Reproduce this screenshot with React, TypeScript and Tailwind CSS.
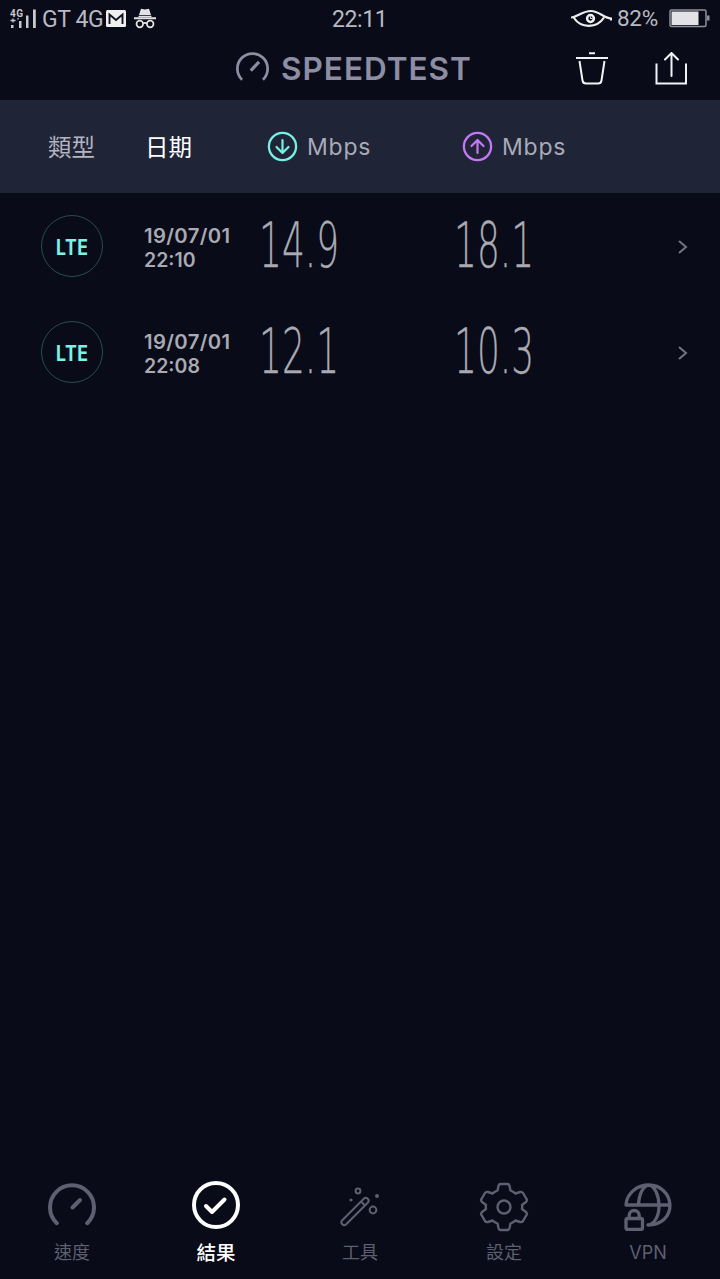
import React from 'react';

const cjk = "font-['Inter','Noto_Sans_CJK_TC',sans-serif]";

function Gauge({ className, thick, round }: { className: string; thick: number; round?: boolean }) {
  return (
    <svg className={className} viewBox="0 0 48 48" fill="none" stroke="currentColor" strokeWidth={thick} strokeLinecap={round ? 'round' : 'butt'}>
      <path d="M8.8 40.2A22 22 0 1 1 39.2 40.2" />
      <path d={round ? 'M24.5 24.5L32 17' : 'M21.5 27L33.5 14.5'} strokeWidth={round ? 4 : 4.6} />
    </svg>
  );
}

function StatusBar() {
  return (
    <div className="relative flex h-[37px] items-center font-['Roboto',sans-serif] text-[#b9b9c1]">
      <svg className="ml-[9px] h-[24px] w-[28px]" viewBox="0 0 28 24" fill="#c8c8ce">
        <text x="1" y="9.5" fontSize="10" fontWeight="700" fontFamily="Roboto" textLength="13">4G</text>
        <path d="M2 18h2.500v3H2zM10 14h2.500v7H10zM17 8.500h2.500v12.500H17zM24 2.500h2.800v18.500H24z" />
        <path d="M4 11.500v4M1.500 13.500h5M9 11v1.500" stroke="#c8c8ce" strokeWidth="1.300" fill="none" />
      </svg>
      <span className="ml-[5px] w-[61px] whitespace-nowrap pt-px text-[23px] leading-none tracking-[-0.4px]">GT 4G</span>
      <svg className="ml-[3px] h-[17px] w-[20px]" viewBox="0 0 20 17">
        <rect width="20" height="17" rx="1.500" fill="#f0f0f0" />
        <path d="M3.500 14V4.500L10 10l6.500-5.500V14" fill="none" stroke="#11131e" strokeWidth="1.900" />
      </svg>
      <svg className="ml-[8px] h-[21px] w-[22px]" viewBox="0 0 22 21" fill="#e3e3e6">
        <path d="M7 .7l4 .8 4-.8 2 6.300H5zM4.500 7.800h13v1.200h-13zM0 9.300h22V11.300H0z" />
        <g fill="none" stroke="#e3e3e6" strokeWidth="1.700"><circle cx="5.800" cy="16" r="3.300" /><circle cx="16.200" cy="16" r="3.300" /><path d="M9 15.500q2-1.300 4 0" /></g>
      </svg>
      <div className="absolute left-0 w-full pl-[332px] pt-[2px] text-[23px] leading-none tracking-[-0.4px]">22:11</div>
      <svg className="ml-auto h-[20px] w-[41px]" viewBox="0 0 41 20" fill="none" stroke="#eeeef0">
        <path d="M0 8.500C7 8 11 2 20 2c8 0 12 6.500 20 7.500v2M3 9C10 19.500 26 19.500 33 8.500" strokeWidth="2.200" />
        <circle cx="19.500" cy="9.500" r="3.400" strokeWidth="2.500" /><path d="M19.500 7.500v2h2" strokeWidth="1" />
      </svg>
      <span className="ml-[5px] w-[42px] whitespace-nowrap text-[22.500px] leading-none tracking-[-0.300px]">82%</span>
      <svg className="ml-[10px] mr-[10px] h-[19px] w-[41px]" viewBox="0 0 41 19">
        <rect x="1" y="1" width="36" height="16.500" rx="1.500" fill="none" stroke="#90919a" strokeWidth="1.500" />
        <path d="M2.500 2.500h27v13.500h-27z" fill="#e3e3e5" /><path d="M38 6.500h2.500v5H38z" fill="#90919a" />
      </svg>
    </div>
  );
}

function TitleBar() {
  return (
    <div className="flex h-[63px] items-center pl-[236px] text-[#8d8da3]">
      <Gauge className="-mt-[1px] h-[33px] w-[33px] shrink-0" thick={4} />
      <span className="ml-[12px] w-[190px] whitespace-nowrap font-['Inter',sans-serif] text-[31.500px] font-semibold leading-none tracking-[1px]">SPEEDTEST</span>
      <svg className="ml-[105px] h-[34px] w-[32px]" viewBox="0 0 32 34" fill="none" stroke="#f2f2f4" strokeWidth="2">
        <path d="M0 6H32M13 1.300H19" /><path d="M3.500 9L6.500 28.500Q7 31.500 10 31.500H22Q25 31.500 25.500 28.500L28.500 9" />
      </svg>
      <svg className="ml-[47px] h-[34px] w-[33px]" viewBox="0 0 33 34" fill="none" stroke="#f2f2f4" strokeWidth="2">
        <path d="M1.500 11.500V31.500H31V11.500" /><path d="M16.500 24V1.500M10 7.500L16.500 1L23 7.500" strokeLinecap="round" />
      </svg>
    </div>
  );
}

function Unit({ up }: { up?: boolean }) {
  return (
    <div className="flex items-center gap-[9px] pl-[7px]">
      <svg className="h-[31px] w-[31px]" viewBox="0 0 31 31" fill="none" stroke={up ? '#c478f6' : '#78efe3'} strokeWidth="2.200" strokeLinecap="round" strokeLinejoin="round">
        <circle cx="15.500" cy="15.500" r="13.600" strokeWidth="2.300" />
        <path d={up ? 'M15.500 22V9M9.500 15L15.500 9L21.500 15' : 'M15.500 9V22M9.500 16L15.500 22L21.500 16'} />
      </svg>
      <span className="pt-[2px] font-['Inter',sans-serif] text-[23px] leading-none tracking-[0.8px] text-[#a9abb7]">Mbps</span>
    </div>
  );
}

function Figure({ value }: { value: string }) {
  return (
    <div className="-ml-[1px] w-[80px]">
      <span className="inline-block origin-left scale-x-[0.58] whitespace-nowrap font-['DejaVu_Sans',sans-serif] text-[62px] font-extralight leading-[64px] text-[#aaaab2] [-webkit-text-stroke:0.3px_#aaaab2]">{value}</span>
    </div>
  );
}

function ResultRow({ time, down, up }: { time: string; down: string; up: string }) {
  return (
    <div className="grid h-[106px] grid-cols-[144px_116px_195px_1fr_42px] items-center">
      <div className="ml-[41px] flex h-[62px] w-[62px] items-center justify-center rounded-full border-[1.5px] border-[#244e53]">
        <span className="scale-x-[0.84] pt-[2px] font-['Inter',sans-serif] text-[21px] font-bold leading-none tracking-[0.6px] text-[#78f3e7]">LTE</span>
      </div>
      <div className="whitespace-nowrap pt-[3px] font-['Inter',sans-serif] text-[19.500px] font-semibold leading-[24px] text-[#aaaab2]">
        <div className="origin-left scale-x-[1.040] tracking-[0.35px]">19/07/01</div>
        <div>{time}</div>
      </div>
      <Figure value={down} />
      <Figure value={up} />
      <svg className="mt-px h-[14px] w-[10px]" viewBox="0 0 10 14" fill="none" stroke="#737582" strokeWidth="2"><path d="M1 1L8 7L1 13" /></svg>
    </div>
  );
}

function Tab({ label, active, children }: { label: string; active?: boolean; children: React.ReactNode }) {
  return (
    <div className={`flex flex-col items-center ${active ? 'text-white' : 'text-[#5e5f70]'}`}>
      <div className="flex h-[56px] items-center justify-center pt-px">{children}</div>
      <span className={`mt-[9px] leading-[20px] ${cjk} ${active ? 'text-[19.5px] font-medium' : 'text-[18px]'}`}>{label}</span>
    </div>
  );
}

export default function App() {
  return (
    <div className="flex h-[1279px] w-[720px] flex-col overflow-hidden bg-[#090b18]">
      <StatusBar />
      <TitleBar />
      <div className={`grid h-[93px] grid-cols-[145px_115px_195px_1fr] items-center bg-[#202437] text-[23.5px] leading-none ${cjk}`}>
        <div className="pl-[48px] pt-[2px] text-[#b2b4c0]">類型</div>
        <div className="pt-[2px] text-white">日期</div>
        <Unit />
        <Unit up />
      </div>
      <ResultRow time="22:10" down="14.9" up="18.1" />
      <ResultRow time="22:08" down="12.1" up="10.3" />
      <div className="mt-auto grid h-[101px] grid-cols-5">
        <Tab label="速度"><Gauge className="h-[48px] w-[48px]" thick={4} round /></Tab>
        <Tab label="結果" active>
          <svg className="-mt-[3px] h-[48px] w-[48px]" viewBox="0 0 48 48" fill="none" stroke="currentColor" strokeWidth="4" strokeLinecap="round" strokeLinejoin="round">
            <circle cx="24" cy="24" r="22" /><path d="M14 25L20 31L32.500 18.500" />
          </svg>
        </Tab>
        <Tab label="工具">
          <svg className="h-[48px] w-[48px]" viewBox="0 0 48 48" fill="none" stroke="currentColor" strokeWidth="2">
            <rect x="-18" y="-2.800" width="36" height="5.600" rx="2.800" transform="translate(19 28.500) rotate(-45)" />
            <path d="M25 18.500L29.500 23" /><circle cx="22" cy="8" r="2.400" /><circle cx="37" cy="27" r="3.400" />
            <circle cx="41" cy="13" r="2" fill="currentColor" stroke="none" /><circle cx="15" cy="17" r="1.600" fill="currentColor" stroke="none" />
          </svg>
        </Tab>
        <Tab label="設定">
          <svg className="h-[50px] w-[50px]" viewBox="0 0 50 50" fill="none" stroke="currentColor" strokeWidth="2.400" strokeLinejoin="round">
            <path d="M21.500 2H28.500Q30 2 30.500 4L31.500 8.500Q34 9.500 36.500 11.500L41 10Q43 9.500 44 11L47.500 17Q48.500 18.500 47 20L43 23Q43.500 25 43 27L47 30Q48.500 31.500 47.500 33L44 39Q43 40.500 41 40L36.500 38.500Q34 40.500 31.500 41.500L30.500 46Q30 48 28.500 48H21.500Q20 48 19.500 46L18.500 41.500Q16 40.500 13.500 38.500L9 40Q7 40.500 6 39L2.500 33Q1.500 31.500 3 30L7 27Q6.500 25 7 23L3 20Q1.500 18.500 2.500 17L6 11Q7 9.500 9 10L13.500 11.500Q16 9.500 18.500 8.500L19.500 4Q20 2 21.500 2Z" />
            <circle cx="25" cy="25" r="6.500" />
          </svg>
        </Tab>
        <Tab label="VPN">
          <svg className="h-[48px] w-[48px]" viewBox="0 0 48 48" fill="none" stroke="currentColor" strokeWidth="3.300" strokeLinecap="round">
            <path d="M2 21.500C3 10 13 2 25 2A21 21 0 0 1 46 22C46 34 37 42 24 42M2 22H46M14.500 22C15 10 20 2 25 2C31 3 35 13 35 23C35 34 30 41 24 42" />
            <rect x="2" y="35.500" width="16.500" height="11" rx="1.500" /><path d="M5.200 35V32.500A5 5 0 0 1 15.200 32.500V35" />
          </svg>
        </Tab>
      </div>
    </div>
  );
}
